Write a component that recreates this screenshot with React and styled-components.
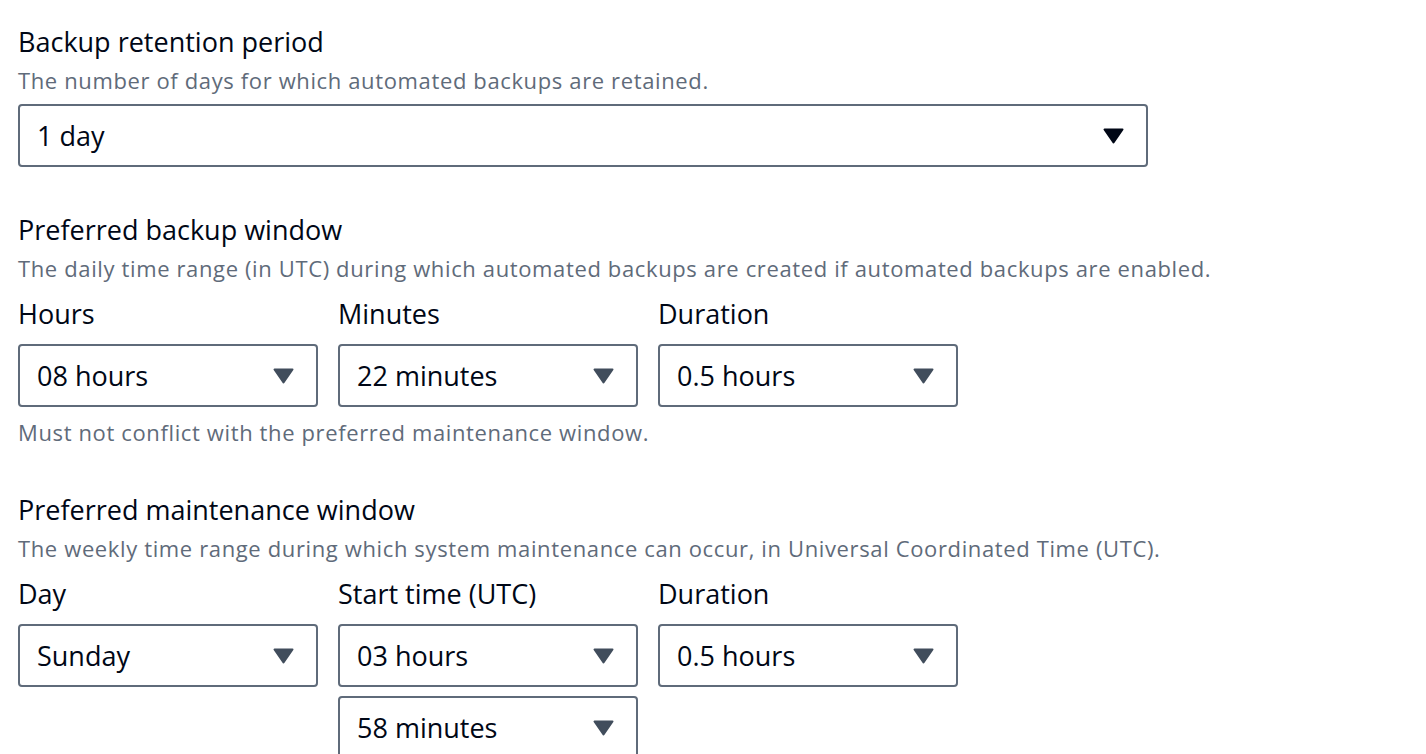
import styled, { createGlobalStyle } from 'styled-components';

const GlobalStyle = createGlobalStyle`
  body {
    margin: 0;
    background: #ffffff;
    font-family: "Open Sans", "Noto Sans", sans-serif;
    color: #000716;
  }
`;

const Page = styled.div`
  padding: 25px 0 0 18px;
`;

const Section = styled.section`
  margin-bottom: ${(p) => p.$gap || '46px'};
`;

const Title = styled.div`
  font-size: 27px;
  line-height: 34px;
  color: #000716;
`;

const Description = styled.div`
  font-size: 22px;
  line-height: 28px;
  letter-spacing: 0.63px;
  color: #5f6b7a;
  margin-top: 7px;
`;

const Hint = styled(Description)`
  margin-top: 11px;
`;

const Columns = styled.div`
  display: flex;
  gap: 20px;
  margin-top: 15px;
`;

const Column = styled.div`
  display: flex;
  flex-direction: column;
  gap: 9px;
  width: 300px;
`;

const Label = styled.div`
  font-size: 27px;
  line-height: 34px;
  margin-bottom: 4px;
`;

const SelectBox = styled.div`
  box-sizing: border-box;
  width: ${(p) => p.$width || '300px'};
  height: 63px;
  border: 2px solid #5f6b7a;
  border-radius: 4px;
  display: flex;
  align-items: center;
  justify-content: space-between;
  padding: 0 22px 0 17px;
  margin-top: ${(p) => p.$top || '0'};
  font-size: 27px;
  color: #000716;
`;

const Caret = ({ color }) => (
  <svg width="21" height="16" viewBox="0 0 21 16">
    <path d="M1.5 1.5 H19.5 L10.5 14.5 Z" fill={color} stroke={color} strokeWidth="2" strokeLinejoin="round" />
  </svg>
);

const Select = ({ value, width, top, dark }) => (
  <SelectBox $width={width} $top={top}>
    <span>{value}</span>
    <Caret color={dark ? '#000716' : '#414d5c'} />
  </SelectBox>
);

const Field = ({ label, values }) => (
  <Column>
    <Label>{label}</Label>
    {values.map((v) => (
      <Select key={v} value={v} />
    ))}
  </Column>
);

export default function App() {
  return (
    <Page>
      <GlobalStyle />
      <Section>
        <Title>Backup retention period</Title>
        <Description>The number of days for which automated backups are retained.</Description>
        <Select value="1 day" width="1130px" top="10px" dark />
      </Section>

      <Section $gap="47px">
        <Title>Preferred backup window</Title>
        <Description>
          The daily time range (in UTC) during which automated backups are created if automated backups are enabled.
        </Description>
        <Columns>
          <Field label="Hours" values={['08 hours']} />
          <Field label="Minutes" values={['22 minutes']} />
          <Field label="Duration" values={['0.5 hours']} />
        </Columns>
        <Hint>Must not conflict with the preferred maintenance window.</Hint>
      </Section>

      <Section>
        <Title>Preferred maintenance window</Title>
        <Description>
          The weekly time range during which system maintenance can occur, in Universal Coordinated Time (UTC).
        </Description>
        <Columns>
          <Field label="Day" values={['Sunday']} />
          <Field label="Start time (UTC)" values={['03 hours', '58 minutes']} />
          <Field label="Duration" values={['0.5 hours']} />
        </Columns>
      </Section>
    </Page>
  );
}
